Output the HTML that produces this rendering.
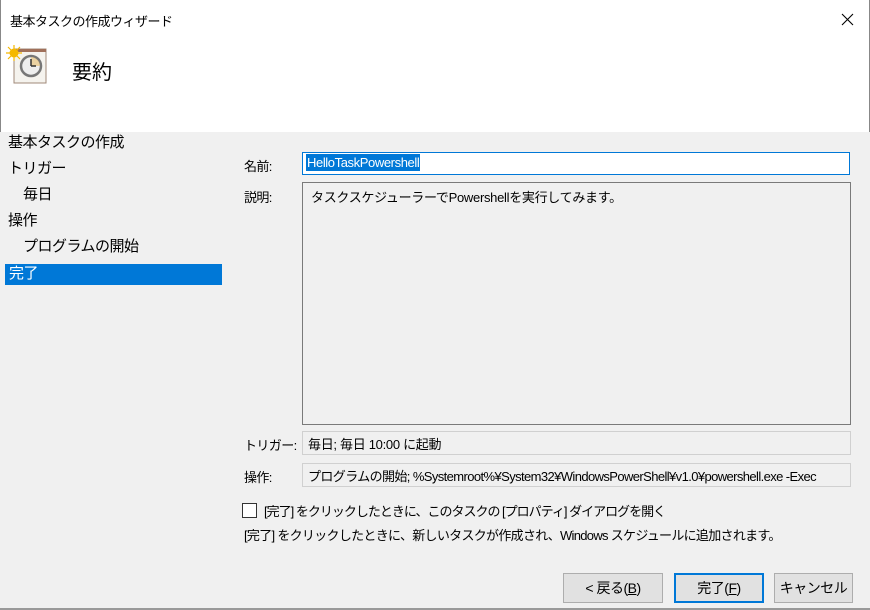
<!DOCTYPE html>
<html><head><meta charset="utf-8"><style>
*{margin:0;padding:0;box-sizing:border-box}
body{width:870px;height:610px;position:relative;overflow:hidden;background:#f0f0f0;font-family:"Liberation Sans","Noto Sans CJK JP",sans-serif;color:#000;font-size:12px}
.a{position:absolute;white-space:nowrap}
.nav{font-size:15px;line-height:20px;letter-spacing:-0.5px}
.box{position:absolute;background:#f0f0f0;border:1px solid #adadad;padding:2px 5px;font-size:12px;overflow:hidden;white-space:nowrap;letter-spacing:-0.3px}
.btn{position:absolute;background:#e1e1e1;border:1px solid #adadad;font-size:14px;text-align:center;line-height:28px;letter-spacing:-0.5px}
.s{letter-spacing:-0.6px;font-size:13px}
</style></head><body>
<div class="a" style="left:0;top:0;width:870px;height:132px;background:#fff;border-left:1px solid #888;border-right:1px solid #888"></div>
<div class="a" style="left:10px;top:11px;font-size:13px;letter-spacing:-0.5px">基本タスクの作成ウィザード</div>
<svg class="a" style="left:841px;top:13px" width="13" height="13"><path d="M1 1L12 12M12 1L1 12" stroke="#000" stroke-width="1.1"/></svg>
<svg class="a" style="left:6px;top:44px" width="42" height="42" viewBox="0 0 42 42">
<rect x="8" y="5" width="32" height="34" fill="#f5f3ee" stroke="#a08a78"/><rect x="8" y="5" width="32" height="3" fill="#a0705a"/>
<circle cx="25" cy="22" r="10" fill="#eee" stroke="#777" stroke-width="2.5"/><path d="M25 22 L25 13 A9 9 0 0 1 34 22Z" fill="#e8c070" opacity=".6"/><path d="M25 22V15M25 22h5" stroke="#333" stroke-width="1.5"/>
<path d="M8 1v16M0 9h16M2 3l12 12M14 3L2 15" stroke="#f5b800" stroke-width="1.2"/><circle cx="8" cy="9" r="4.5" fill="#f5b800"/>
</svg>
<div class="a" style="left:72px;top:56px;font-size:20px">要約</div>
<div class="a nav" style="left:8px;top:133px">基本タスクの作成</div>
<div class="a nav" style="left:8px;top:159px">トリガー</div>
<div class="a nav" style="left:23px;top:185px">毎日</div>
<div class="a nav" style="left:8px;top:211px">操作</div>
<div class="a nav" style="left:23px;top:237px">プログラムの開始</div>
<div class="a nav" style="left:5px;top:264px;width:217px;height:21px;background:#0078d7;color:#fff;padding-left:4px">完了</div>
<div class="a s" style="left:244px;top:156px">名前:</div>
<div class="box" style="left:302px;top:152px;width:548px;height:23px;background:#fff;border-color:#0078d7;padding:2px 3px"><span style="background:#0078d7;color:#fff;padding:1px 1px;font-size:13px;letter-spacing:-0.4px">HelloTaskPowershell</span></div>
<div class="a s" style="left:244px;top:187px">説明:</div>
<div class="box" style="left:302px;top:182px;width:549px;height:243px;border-color:#7a7a7a;padding:4px 8px;font-size:13px">タスクスケジューラーでPowershellを実行してみます。</div>
<div class="a s" style="left:244px;top:435px">トリガー:</div>
<div class="box" style="left:302px;top:431px;width:549px;height:24px;border-color:#d0d0d0;font-size:13px">毎日; 毎日 10:00 に起動</div>
<div class="a s" style="left:244px;top:467px">操作:</div>
<div class="box" style="left:302px;top:463px;width:549px;height:24px;border-color:#d0d0d0;font-size:13px;letter-spacing:-0.6px">プログラムの開始; %Systemroot%¥System32¥WindowsPowerShell¥v1.0¥powershell.exe -Exec</div>
<div class="a" style="left:242px;top:503px;width:15px;height:15px;background:#fff;border:1px solid #333"></div>
<div class="a s" style="left:264px;top:501px;letter-spacing:-1px">[完了] をクリックしたときに、このタスクの [プロパティ] ダイアログを開く</div>
<div class="a s" style="left:244px;top:525px;letter-spacing:-0.7px">[完了] をクリックしたときに、新しいタスクが作成され、Windows スケジュールに追加されます。</div>
<div class="btn" style="left:563px;top:573px;width:100px;height:30px">&lt; 戻る(<u>B</u>)</div>
<div class="btn" style="left:674px;top:573px;width:90px;height:30px;border:2px solid #0078d7;line-height:26px">完了(<u>F</u>)</div>
<div class="btn" style="left:774px;top:573px;width:79px;height:30px">キャンセル</div>
<div class="a" style="left:0;top:608px;width:870px;height:2px;background:#999"></div>
</body></html>
